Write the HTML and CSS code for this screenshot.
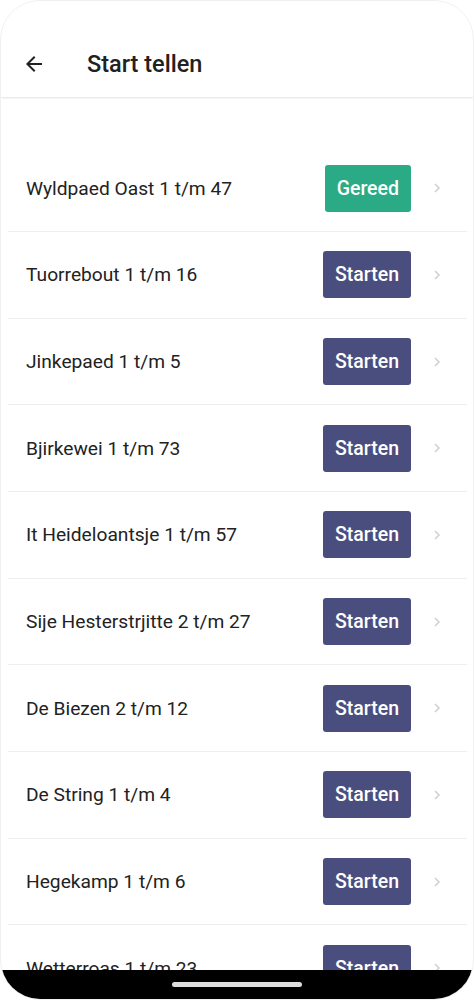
FILE: index.html
```html
<!DOCTYPE html>
<html lang="nl">
<head>
    <meta charset="UTF-8">
    <meta name="viewport" content="width=device-width, initial-scale=1.0">
    <title>Start tellen</title>
    <link rel="stylesheet" href="styles.css">
</head>
<body>
    <div class="phone">
        <header class="topbar">
            <svg class="back" width="24" height="24" viewBox="0 0 24 24">
                <path d="M20 11H7.83l5.59-5.59L12 4l-8 8 8 8 1.41-1.41L7.83 13H20v-2z" fill="#212121"/>
            </svg>
            <h1>Start tellen</h1>
        </header>

        <ul class="list">
            <li class="row"><span class="name">Wyldpaed Oast 1 t/m 47</span><span class="btn done">Gereed</span><svg class="chev" width="8" height="12" viewBox="0 0 8 12"><path d="M2 2l4 4-4 4" fill="none" stroke="#cfcfcf" stroke-width="1.5"/></svg></li>
            <li class="row"><span class="name">Tuorrebout 1 t/m 16</span><span class="btn">Starten</span><svg class="chev" width="8" height="12" viewBox="0 0 8 12"><path d="M2 2l4 4-4 4" fill="none" stroke="#cfcfcf" stroke-width="1.5"/></svg></li>
            <li class="row"><span class="name">Jinkepaed 1 t/m 5</span><span class="btn">Starten</span><svg class="chev" width="8" height="12" viewBox="0 0 8 12"><path d="M2 2l4 4-4 4" fill="none" stroke="#cfcfcf" stroke-width="1.5"/></svg></li>
            <li class="row"><span class="name">Bjirkewei 1 t/m 73</span><span class="btn">Starten</span><svg class="chev" width="8" height="12" viewBox="0 0 8 12"><path d="M2 2l4 4-4 4" fill="none" stroke="#cfcfcf" stroke-width="1.5"/></svg></li>
            <li class="row"><span class="name">It Heideloantsje 1 t/m 57</span><span class="btn">Starten</span><svg class="chev" width="8" height="12" viewBox="0 0 8 12"><path d="M2 2l4 4-4 4" fill="none" stroke="#cfcfcf" stroke-width="1.5"/></svg></li>
            <li class="row"><span class="name">Sije Hesterstrjitte 2 t/m 27</span><span class="btn">Starten</span><svg class="chev" width="8" height="12" viewBox="0 0 8 12"><path d="M2 2l4 4-4 4" fill="none" stroke="#cfcfcf" stroke-width="1.5"/></svg></li>
            <li class="row"><span class="name">De Biezen 2 t/m 12</span><span class="btn">Starten</span><svg class="chev" width="8" height="12" viewBox="0 0 8 12"><path d="M2 2l4 4-4 4" fill="none" stroke="#cfcfcf" stroke-width="1.5"/></svg></li>
            <li class="row"><span class="name">De String 1 t/m 4</span><span class="btn">Starten</span><svg class="chev" width="8" height="12" viewBox="0 0 8 12"><path d="M2 2l4 4-4 4" fill="none" stroke="#cfcfcf" stroke-width="1.5"/></svg></li>
            <li class="row"><span class="name">Hegekamp 1 t/m 6</span><span class="btn">Starten</span><svg class="chev" width="8" height="12" viewBox="0 0 8 12"><path d="M2 2l4 4-4 4" fill="none" stroke="#cfcfcf" stroke-width="1.5"/></svg></li>
            <li class="row"><span class="name">Wetterroas 1 t/m 23</span><span class="btn">Starten</span><svg class="chev" width="8" height="12" viewBox="0 0 8 12"><path d="M2 2l4 4-4 4" fill="none" stroke="#cfcfcf" stroke-width="1.5"/></svg></li>
        </ul>

        <div class="navbar"><div class="home"></div></div>
    </div>
</body>
</html>
```

FILE: styles.css
```css
* {margin: 0; padding: 0; box-sizing: border-box;}
body {background: #fff; font-family: Roboto, "Noto Sans", sans-serif; color: #222;}

.phone {position: relative; width: 474px; height: 1000px; overflow: hidden;
    border-radius: 40px; border: 1px solid #f0f0f0; background: #fff;}

.topbar {height: 96px; display: flex; align-items: center; padding: 30px 0 0 21px;
    background: #fff; box-shadow: 0 1px 2px rgba(0,0,0,0.12); position: relative; z-index: 1;}
.topbar h1 {font-size: 23.5px; font-weight: 500; margin-left: 41px; color: #212121;}

.list {list-style: none; padding-top: 48.5px;}
.row {height: 86.67px; margin: 0 6px 0 7px; padding: 0 26px 0 18px;
    display: flex; align-items: center; border-bottom: 1px solid #eeeeee;}
.row .name {flex: 1; font-size: 19.2px; color: #222;}
.btn {height: 47px; padding: 0 12px; display: flex; align-items: center;
    background: #4a4e7e; color: #fff; font-size: 19.5px; font-weight: 500;
    border-radius: 3px; margin-right: 22px;}
.btn.done {background: #2bab85; padding: 0 12px; margin-right: 22px;}
.chev {flex: none;}

.navbar {position: absolute; left: 0; right: 0; bottom: 0; height: 29px; background: #000;
    display: flex; justify-content: center; padding-top: 12px;}
.home {width: 130px; height: 5px; border-radius: 3px; background: #ddd;}
```
